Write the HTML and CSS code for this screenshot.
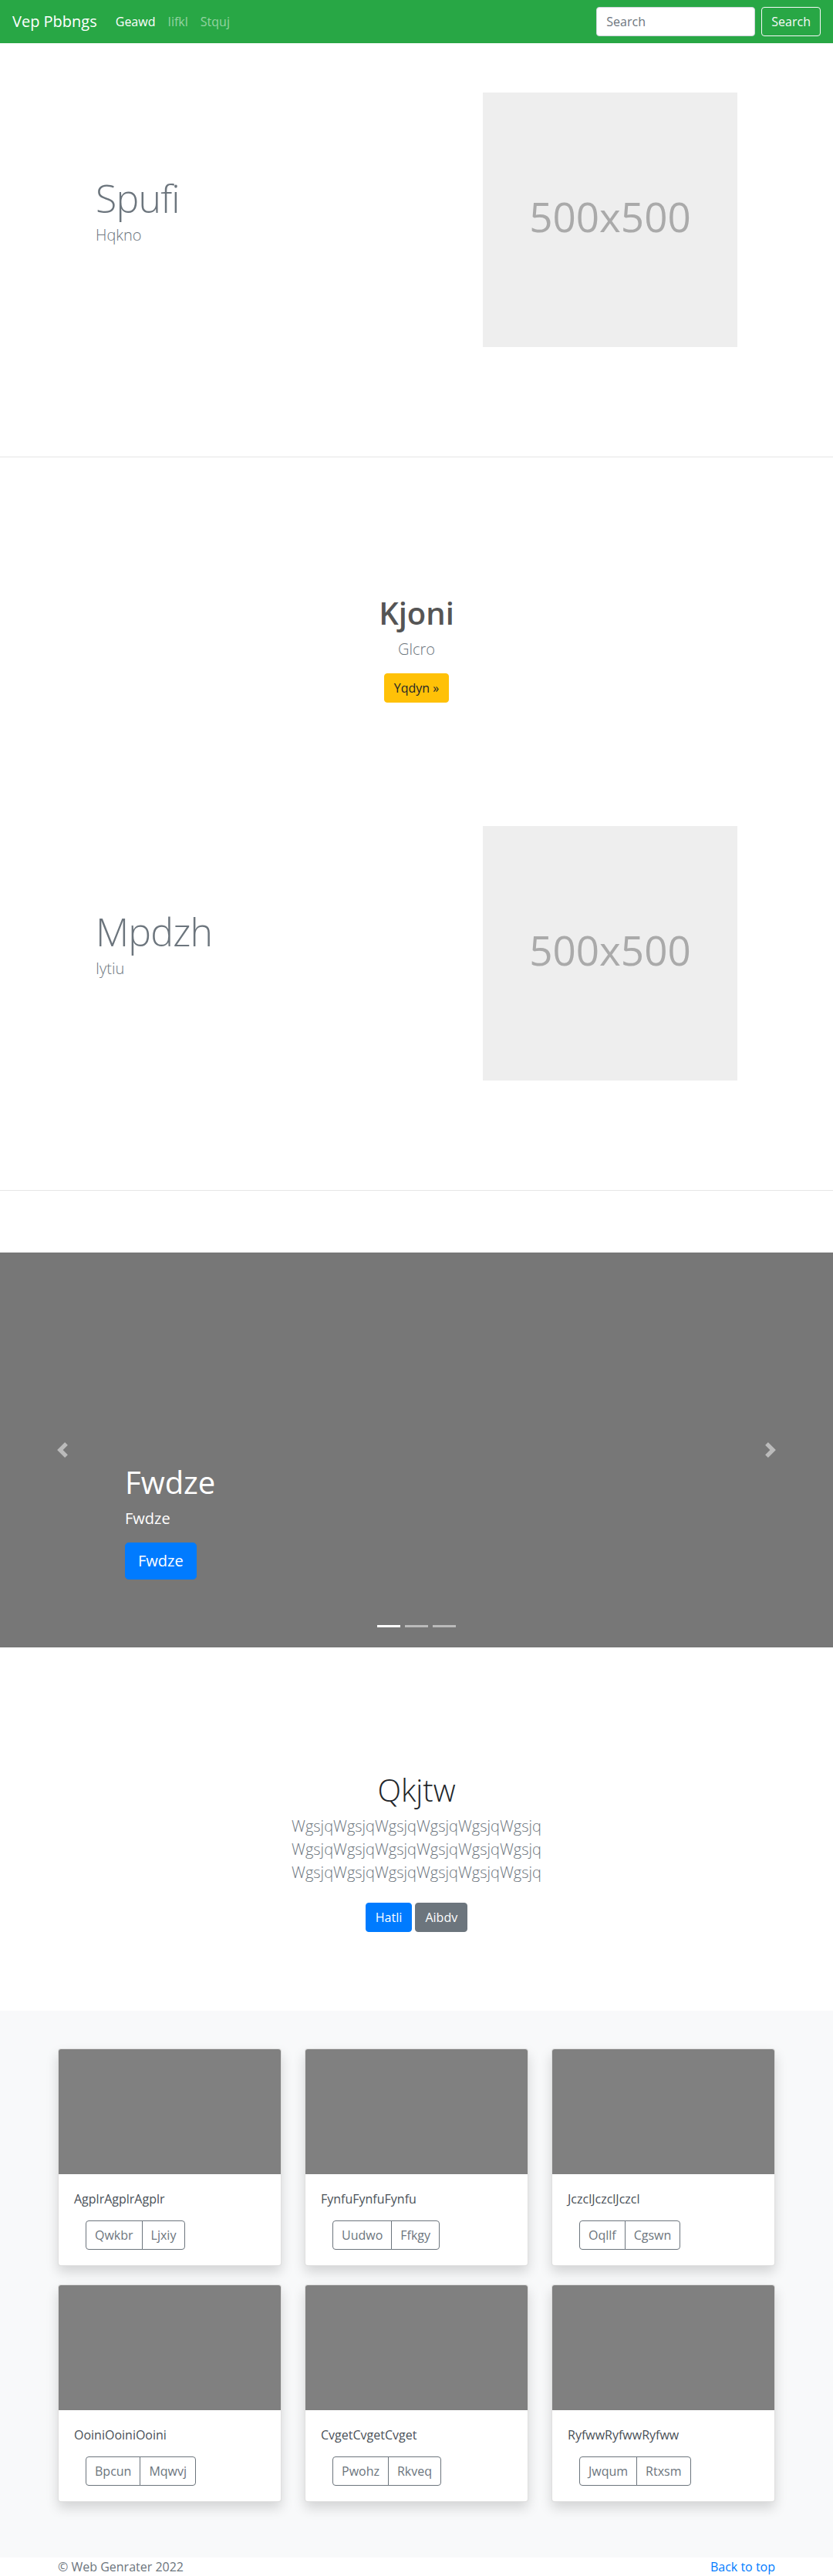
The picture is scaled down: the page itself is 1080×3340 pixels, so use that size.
FILE: index.html
```html
<!DOCTYPE html>
<html lang="en">
<head>
<meta charset="utf-8">
<title>Vep Pbbngs</title>
<link rel="stylesheet" href="styles.css">
</head>
<body>
<nav class="navbar">
  <a class="brand" href="#">Vep Pbbngs</a>
  <ul class="nav">
    <li><a class="nav-link active" href="#">Geawd</a></li>
    <li><a class="nav-link" href="#">Iifkl</a></li>
    <li><a class="nav-link" href="#">Stquj</a></li>
  </ul>
  <form class="search">
    <input class="search-input" type="text" placeholder="Search">
    <button class="btn btn-outline-light" type="button">Search</button>
  </form>
</nav>

<main>
  <section class="featurette">
    <div class="featurette-inner">
      <div class="featurette-text">
        <h2 class="featurette-heading">Spufi</h2>
        <p class="lead muted">Hqkno</p>
      </div>
      <svg class="placeholder" width="330" height="330" role="img" aria-label="500x500">
        <rect width="100%" height="100%" fill="#eee"/>
        <text x="50%" y="50%" dy=".3em" text-anchor="middle" class="placeholder-text">500x500</text>
      </svg>
    </div>
  </section>

  <section class="hero">
    <h1 class="hero-title">Kjoni</h1>
    <p class="lead muted hero-lead">Glcro</p>
    <div class="hero-actions"><a class="btn btn-warning" href="#">Yqdyn »</a></div>
  </section>

  <section class="featurette">
    <div class="featurette-inner">
      <div class="featurette-text">
        <h2 class="featurette-heading">Mpdzh</h2>
        <p class="lead muted">Iytiu</p>
      </div>
      <svg class="placeholder" width="330" height="330" role="img" aria-label="500x500">
        <rect width="100%" height="100%" fill="#eee"/>
        <text x="50%" y="50%" dy=".3em" text-anchor="middle" class="placeholder-text">500x500</text>
      </svg>
    </div>
  </section>

  <div class="carousel">
    <ol class="indicators">
      <li class="active"></li>
      <li></li>
      <li></li>
    </ol>
    <div class="caption">
      <h1 class="caption-title">Fwdze</h1>
      <p class="lead caption-lead">Fwdze</p>
      <p class="caption-actions"><a class="btn btn-lg btn-primary" href="#">Fwdze</a></p>
    </div>
    <a class="control control-prev" href="#">
      <svg viewBox="0 0 8 8" width="20" height="20"><path fill="#fff" d="M5.25 0l-4 4 4 4 1.5-1.5L4.25 4l2.5-2.5L5.25 0z"/></svg>
    </a>
    <a class="control control-next" href="#">
      <svg viewBox="0 0 8 8" width="20" height="20"><path fill="#fff" d="M2.75 0l-1.5 1.5L3.75 4l-2.5 2.5L2.75 8l4-4-4-4z"/></svg>
    </a>
  </div>

  <section class="jumbotron">
    <h1 class="jumbotron-heading">Qkjtw</h1>
    <p class="lead muted jumbotron-lead">WgsjqWgsjqWgsjqWgsjqWgsjqWgsjq WgsjqWgsjqWgsjqWgsjqWgsjqWgsjq WgsjqWgsjqWgsjqWgsjqWgsjqWgsjq</p>
    <p class="jumbotron-actions">
      <a class="btn btn-primary my-2" href="#">Hatli</a>
      <a class="btn btn-secondary my-2" href="#">Aibdv</a>
    </p>
  </section>

  <div class="album">
    <div class="album-grid">
      <div class="card">
        <div class="card-img"></div>
        <div class="card-body">
          <p class="card-text">AgplrAgplrAgplr</p>
          <div class="btn-group"><a class="btn btn-outline-secondary" href="#">Qwkbr</a><a class="btn btn-outline-secondary" href="#">Ljxiy</a></div>
        </div>
      </div>
      <div class="card">
        <div class="card-img"></div>
        <div class="card-body">
          <p class="card-text">FynfuFynfuFynfu</p>
          <div class="btn-group"><a class="btn btn-outline-secondary" href="#">Uudwo</a><a class="btn btn-outline-secondary" href="#">Ffkgy</a></div>
        </div>
      </div>
      <div class="card">
        <div class="card-img"></div>
        <div class="card-body">
          <p class="card-text">JczclJczclJczcl</p>
          <div class="btn-group"><a class="btn btn-outline-secondary" href="#">Oqllf</a><a class="btn btn-outline-secondary" href="#">Cgswn</a></div>
        </div>
      </div>
      <div class="card">
        <div class="card-img"></div>
        <div class="card-body">
          <p class="card-text">OoiniOoiniOoini</p>
          <div class="btn-group"><a class="btn btn-outline-secondary" href="#">Bpcun</a><a class="btn btn-outline-secondary" href="#">Mqwvj</a></div>
        </div>
      </div>
      <div class="card">
        <div class="card-img"></div>
        <div class="card-body">
          <p class="card-text">CvgetCvgetCvget</p>
          <div class="btn-group"><a class="btn btn-outline-secondary" href="#">Pwohz</a><a class="btn btn-outline-secondary" href="#">Rkveq</a></div>
        </div>
      </div>
      <div class="card">
        <div class="card-img"></div>
        <div class="card-body">
          <p class="card-text">RyfwwRyfwwRyfww</p>
          <div class="btn-group"><a class="btn btn-outline-secondary" href="#">Jwqum</a><a class="btn btn-outline-secondary" href="#">Rtxsm</a></div>
        </div>
      </div>
    </div>
  </div>
</main>

<footer class="footer">
  <p class="copyright">© Web Genrater 2022</p>
  <p class="back-top"><a href="#">Back to top</a></p>
</footer>
</body>
</html>
```

FILE: styles.css
```css
* { box-sizing: border-box; }

html, body {
  margin: 0;
  padding: 0;
}

body {
  font-family: "Open Sans", "Noto Sans", "Liberation Sans", sans-serif;
  font-size: 16px;
  line-height: 1.5;
  color: #212529;
  background: #fff;
}

a { text-decoration: none; }

/* ---------- Navbar ---------- */
.navbar {
  display: flex;
  align-items: center;
  height: 56px;
  padding: 0 16px;
  background: #28a745;
}

.brand {
  font-size: 20px;
  line-height: 30px;
  color: #fff;
  margin-right: 16px;
  white-space: nowrap;
}

.nav {
  display: flex;
  list-style: none;
  margin: 0;
  padding: 0;
}

.nav-link {
  display: block;
  padding: 8px 8px;
  color: rgba(255, 255, 255, .5);
}

.nav-link.active { color: #fff; }

.search {
  display: flex;
  align-items: center;
  margin-left: auto;
}

.search-input {
  width: 206px;
  height: 38px;
  padding: 6px 12px;
  font: inherit;
  font-size: 16px;
  color: #495057;
  background: #fff;
  border: 1px solid #ced4da;
  border-radius: 4px;
  margin-right: 8px;
}

.search-input::placeholder { color: #6c757d; }

/* ---------- Buttons ---------- */
.btn {
  display: inline-block;
  font-family: inherit;
  font-size: 16px;
  line-height: 24px;
  padding: 6px 12px;
  border: 1px solid transparent;
  border-radius: 4px;
  text-align: center;
  vertical-align: middle;
  white-space: nowrap;
  cursor: pointer;
}

.btn-outline-light {
  color: #f8f9fa;
  background: transparent;
  border-color: #f8f9fa;
}

.btn-warning {
  color: #212529;
  background: #ffc107;
  border-color: #ffc107;
}

.btn-primary {
  color: #fff;
  background: #007bff;
  border-color: #007bff;
}

.btn-secondary {
  color: #fff;
  background: #6c757d;
  border-color: #6c757d;
}

.btn-outline-secondary {
  color: #6c757d;
  background: transparent;
  border-color: #6c757d;
  padding: 6px 11px;
}

.btn-lg {
  font-size: 20px;
  line-height: 30px;
  padding: 8px 16px;
  border-radius: 4.8px;
}

.my-2 { margin: 8px 0; }

/* ---------- Common text ---------- */
.lead {
  font-size: 20px;
  line-height: 30px;
  font-weight: 300;
}

.muted { color: #6c757d; }

/* ---------- Featurettes ---------- */
.featurette {
  padding: 64px 0 142px;
  border-bottom: 1px solid #e6e6e6;
}

.featurette-inner {
  width: 832px;
  margin: 0 auto;
  display: flex;
  justify-content: space-between;
  align-items: flex-start;
}

.featurette-text {
  padding-top: 112px;
}

.featurette-heading {
  margin: 0 0 8px;
  font-size: 50px;
  line-height: 1;
  font-weight: 300;
  letter-spacing: -0.8px;
  color: #6c757d;
}

.featurette-text .lead { margin: 0; }

.placeholder {
  display: block;
  flex: 0 0 330px;
}

.placeholder-text {
  font-family: "Open Sans", "Noto Sans", sans-serif;
  font-size: 53px;
  fill: #aaa;
}

/* ---------- Hero ---------- */
.hero {
  padding: 178px 0 96px;
  text-align: center;
}

.hero-title {
  margin: 0 0 8px;
  font-size: 40px;
  line-height: 48px;
  font-weight: 600;
  color: #555;
}

.hero-lead { margin: 0 0 16px; }

.hero-actions { line-height: 0; }

/* ---------- Carousel ---------- */
.carousel {
  position: relative;
  height: 512px;
  margin-top: 80px;
  background: #777;
}

.indicators {
  position: absolute;
  left: 0;
  right: 0;
  bottom: 0;
  display: flex;
  justify-content: center;
  list-style: none;
  margin: 0 0 16px;
  padding: 0;
}

.indicators li {
  width: 30px;
  height: 23px;
  margin: 0 3px;
  border-top: 10px solid transparent;
  border-bottom: 10px solid transparent;
  background: #fff;
  background-clip: padding-box;
  opacity: .5;
}

.indicators li.active { opacity: 1; }

.caption {
  position: absolute;
  left: 15%;
  right: 15%;
  bottom: 52px;
  padding: 20px 0;
  color: #fff;
}

.caption-title {
  margin: 0 0 8px;
  font-size: 40px;
  line-height: 48px;
  font-weight: 500;
}

.caption-lead {
  margin: 0 0 16px;
  font-weight: 400;
}

.caption-actions { margin: 0 0 16px; line-height: 0; }

.control {
  position: absolute;
  top: 0;
  bottom: 0;
  width: 15%;
  display: flex;
  align-items: center;
  justify-content: center;
  opacity: .5;
}

.control-prev { left: 0; }
.control-next { right: 0; }

.control svg { display: block; }

/* ---------- Jumbotron ---------- */
.jumbotron {
  padding: 161px 0 78px;
  text-align: center;
}

.jumbotron-heading {
  margin: 0 0 8px;
  font-size: 40px;
  line-height: 48px;
  font-weight: 300;
  color: #212529;
}

.jumbotron-lead {
  width: 450px;
  margin: 0 auto 16px;
}

.jumbotron-actions { margin: 0 0 16px; }

/* ---------- Album ---------- */
.album {
  background: #f8f9fa;
  padding: 49px 0 72px;
}

.album-grid {
  width: 930px;
  margin: 0 auto;
  display: grid;
  grid-template-columns: repeat(3, 1fr);
  column-gap: 30px;
  row-gap: 24px;
}

.card {
  background: #fff;
  border: 1px solid rgba(0, 0, 0, .125);
  border-radius: 4px;
  box-shadow: 0 8px 16px rgba(0, 0, 0, .15);
  overflow: hidden;
}

.card-img {
  height: 162px;
  background: #808080;
}

.card-body {
  padding: 20px;
}

.card-text {
  margin: 0 0 16px;
  color: #495057;
}

.btn-group {
  display: inline-flex;
  margin-left: 15px;
}

.btn-group .btn:first-child {
  border-top-right-radius: 0;
  border-bottom-right-radius: 0;
}

.btn-group .btn + .btn {
  margin-left: -1px;
  border-top-left-radius: 0;
  border-bottom-left-radius: 0;
}

/* ---------- Footer ---------- */
.footer {
  width: 930px;
  margin: 0 auto;
  display: flex;
  justify-content: space-between;
  color: #6c757d;
  line-height: 24px;
}

.footer p { margin: 0; }

.back-top a { color: #007bff; }
```
